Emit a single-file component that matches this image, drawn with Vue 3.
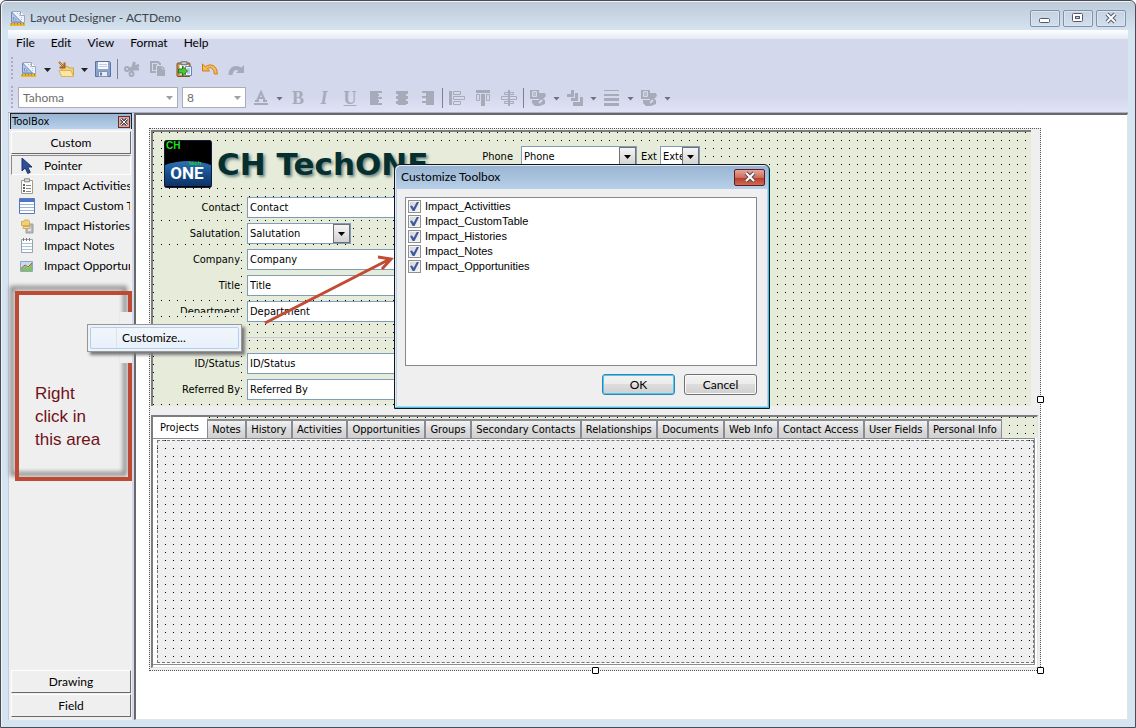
<script setup>
import { ref } from 'vue'

const menus = ['File', 'Edit', 'View', 'Format', 'Help']

const art = {
  layout: '<path d="M2 1.5h8.5l4 4v7H2z" fill="#eef3fb" stroke="#9aa8c6"/><path d="M10.5 1.5v4h4" fill="#fff" stroke="#9aa8c6"/><path d="M1.500 2v10h10z" fill="#b4c8e8" stroke="#6e88b8"/><path d="M3.500 7v3h3z" fill="#f3f7fd" stroke="#7d95c2"/><path d="M7 3h1v1H7zM9 5h1v1H9zM11 7h1v1h-1zM9 3h1v1H9zM11 9h1v1h-1z" fill="#b3c2de"/><path d="M0 13h15v3H0z" fill="#e9b62d"/><path d="M1.500 13v1.500M4.500 13v1.500M7.500 13v1.500M10.500 13v1.500M13.500 13v1.500" stroke="#a8801a"/>',
  open: '<path d="M6 5.500h4l1 1.500h4.500v8H3.500V9z" fill="#f2d27d" stroke="#cfa648"/><path d="M1 9.500h12l2.500 6H3.500z" fill="#fbe6a4" stroke="#d6b05a"/><path d="M1 1l5 5M6.500 1.500v5h-5" fill="none" stroke="#a8641f" stroke-width="2"/><path d="M1.500 1.500l4 4" stroke="#f0b23f"/>',
  save: '<path d="M.5.500h14l1 1v14H.5z" fill="#8ca3cb" stroke="#5a72a3"/><path d="M3 1h10v7H3z" fill="#f6f8fc"/><path d="M4 3.500h8M4 5.500h8" stroke="#c3cde0"/><path d="M3.500 10.500h9v5h-9z" fill="#e8ecf4" stroke="#8093b8"/><path d="M5 11.500h2v3H5z" fill="#6279a6"/>',
  cut: '<g fill="none" stroke="#a6abba" stroke-width="2"><circle cx="3" cy="8" r="2"/><circle cx="7.500" cy="13" r="2"/><path d="M5 8.500L15 4M7.500 11l3-10M8 8h7" stroke-width="3"/></g>',
  copy: '<path d="M1 1h7l2 2v8H1z" fill="none" stroke="#a6abba" stroke-width="2"/><path d="M3 3h4v6H3z" fill="#a6abba"/><path d="M6.500 4.500h6l3 3v8h-9z" fill="#a6abba" stroke="#d3d8ec"/><path d="M12 5v3h3" fill="none" stroke="#c4c9d9"/>',
  paste: '<rect x="1" y="2" width="13" height="13.500" rx="1" fill="#c9924c" stroke="#7b5220"/><path d="M3.500 4h9v9.500h-9z" fill="#fff"/><path d="M5 .8h6v3H5z" fill="#c6cad2" stroke="#666d79"/><path d="M9.500 5.500h6v9h-6z" fill="#eef3fb" stroke="#6886b4"/><path d="M11 8h3M11 10h3M11 12h3" stroke="#7f9ecb"/><path d="M2.500 8h4V5l5 5-5 5v-3h-4z" fill="#4fc43a" stroke="#1b7d15"/>',
  undo: '<path d="M.5 3v7h7L5.300 7.600c3-2 6.700-.6 7 5.400h3c0-9-7-11-12-7.300z" fill="#f6bd55" stroke="#cf7e1a"/>',
  redo: '<path d="M16 4v8H8l2.500-2.500C7 7.800 5 10 4.500 14H.5C.5 5.500 7.500 3 13.500 6.500z" fill="#a6abba"/>',
  color: '<path d="M2 11h4M10 11h4M4 11l4-9 4 9M5.500 8h5" fill="none" stroke="#a6abba" stroke-width="2"/><path d="M1 13h14v2H1z" fill="#a6abba"/>',
  left: '<path d="M2 1h12v2H2zM2 4h9v2H2zM2 7h12v2H2zM2 10h9v2H2zM2 13h12v2H2z" fill="#a6abba"/><path d="M2 1h8v14H2z" fill="#a6abba"/>',
  center: '<path d="M2 1h12v3H2zM2 6h12v3H2zM2 11h12v3H2z" fill="#a6abba"/><path d="M4 1h8v14H4z" fill="#a6abba"/>',
  right: '<path d="M2 1h12v2H2zM2 6h12v2H2zM2 11h12v2H2z" fill="#a6abba"/><path d="M6 1h8v14H6z" fill="#a6abba"/>',
  objLeft: '<path d="M0 1h3v14H0z" fill="#a6abba"/><path d="M4.500 1.500h7v3h-7zM4.500 6.500h11v3h-11zM4.500 11.500h7v3h-7z" fill="none" stroke="#a6abba"/>',
  objTop: '<path d="M1 0h14v3H1z" fill="#a6abba"/><path d="M1.500 4.500h3v6h-3zM11.500 4.500h3v6h-3z" fill="none" stroke="#a6abba"/><path d="M6 4h4v12H6z" fill="#a6abba"/>',
  objMid: '<path d="M7 0h2v16H7z" fill="#a6abba"/><path d="M3.500 2.500h9v2h-9zM.5 6.500h15v3H.5zM3.500 11.500h9v2h-9z" fill="none" stroke="#a6abba"/>',
  style: '<path d="M0 0h9v9H0z" fill="#a6abba"/><path d="M2.500 1.500h4v5h-4z" fill="#b8bdcb" stroke="#d3d8ec"/><path d="M9 3h6l1 3-3 3 2 1v4l-5 2H5l-3-3v-3h7z" fill="#a6abba"/><path d="M9 13l3-3" stroke="#d3d8ec" stroke-width="2"/>',
  order: '<path d="M4 0h3v7H0V4h4z" fill="#a6abba"/><path d="M8 3h3v8H4V8h4zM13 7h3v9H6v-4h7z" fill="#a6abba"/>',
  lines: '<path d="M0 0h15v1H0zM0 4h15v2H0zM0 8h15v3H0zM0 13h15v3H0z" fill="#a6abba"/>',
  pointer: '<path d="M3 0v13l3.200-3 2.600 5.500 2.500-1.200-2.600-5.300H13z" fill="#2f4f96" stroke="#1d3470"/>',
  tasks: '<path d="M2.500 2.500h11v13h-11z" fill="#fff" stroke="#a39a88"/><path d="M5.500.8h5v3h-5z" fill="#ddd" stroke="#888"/><path d="M4 6h2v2H4zM4 9h2v2H4zM4 12h2v2H4z" fill="#5b6b62"/><path d="M7 7.500h5M7 10.500h5M7 13.500h5" stroke="#888"/>',
  table: '<path d="M.5.500h15v15H.5z" fill="#fff" stroke="#5779ba"/><path d="M1 1h14v3H1z" fill="#4f76c2"/><path d="M1 6.500h14M1 9.500h14M1 12.500h14" stroke="#9fb4dc"/>',
  history: '<path d="M7 6h7v9H7z" fill="#b5b8bd" stroke="#9a9da3"/><path d="M9 9h3v4H9z" fill="#e2e4e7"/><path d="M2.500 3.500h2l1-1.500h4l1 1.500v4h-8z" fill="#f0cf76" stroke="#cfae5a"/><path d="M4 8.500h7v2H4z" fill="#f6dd96" stroke="#cfae5a"/>',
  notes: '<path d="M2.500 1.500h11v13h-11z" fill="#fff" stroke="#98a3b1"/><path d="M3 5.500h10M3 8.500h10M3 11.500h10" stroke="#a9c6d8"/><path d="M4.500 0v3M7.500 0v3M10.500 0v3" stroke="#777"/>',
  chart: '<path d="M1.500 3.500h12v10h-12z" fill="#c2dcf4" stroke="#8fa8be"/><path d="M2 11l4-3 3 2 4-5v8H2z" fill="#81c162"/><path d="M2 10.500l4-3.500 3 2 4-4" fill="none" stroke="#d04c32"/>'
}

const standardTools = [
  { icon: 'layout', label: 'New layout', drop: true },
  { icon: 'open', label: 'Open', drop: true },
  { icon: 'save', label: 'Save' },
  { sep: true },
  { icon: 'cut', label: 'Cut' },
  { icon: 'copy', label: 'Copy' },
  { icon: 'paste', label: 'Paste' },
  { icon: 'undo', label: 'Undo' },
  { icon: 'redo', label: 'Redo' }
]

const formatTools = [
  { icon: 'color', label: 'Font color', drop: true },
  { letter: 'B', label: 'Bold' },
  { letter: 'I', label: 'Italic' },
  { letter: 'U', label: 'Underline' },
  { icon: 'left', label: 'Align text left' },
  { icon: 'center', label: 'Align text center' },
  { icon: 'right', label: 'Align text right' },
  { sep: true },
  { icon: 'objLeft', label: 'Align left edges' },
  { icon: 'objTop', label: 'Align top edges' },
  { icon: 'objMid', label: 'Align centers' },
  { sep: true },
  { icon: 'style', label: 'Fill', drop: true },
  { icon: 'order', label: 'Order', drop: true },
  { icon: 'lines', label: 'Line weight', drop: true },
  { icon: 'style', label: 'Line color', drop: true }
]

const toolItems = [
  { icon: 'pointer', name: 'Pointer' },
  { icon: 'tasks', name: 'Impact Activities' },
  { icon: 'table', name: 'Impact Custom Table' },
  { icon: 'history', name: 'Impact Histories' },
  { icon: 'notes', name: 'Impact Notes' },
  { icon: 'chart', name: 'Impact Opportunities' }
]
const activeTool = ref('Pointer')

const fields = [
  { id: 'contact', label: 'Contact' },
  { id: 'salutation', label: 'Salutation', combo: true },
  { id: 'company', label: 'Company' },
  { id: 'title', label: 'Title' },
  { id: 'department', label: 'Department', clipped: true },
  { id: 'divider', rule: true },
  { id: 'status', label: 'ID/Status' },
  { id: 'referred', label: 'Referred By' }
]

const tabs = [
  'Projects', 'Notes', 'History', 'Activities', 'Opportunities', 'Groups',
  'Secondary Contacts', 'Relationships', 'Documents', 'Web Info',
  'Contact Access', 'User Fields', 'Personal Info'
]
const activeTab = ref('Projects')

const controls = ref([
  { name: 'Impact_Activitties', on: true },
  { name: 'Impact_CustomTable', on: true },
  { name: 'Impact_Histories', on: true },
  { name: 'Impact_Notes', on: true },
  { name: 'Impact_Opportunities', on: true }
])
</script>

<template>
  <div class="window">
    <header class="titlebar">
      <svg class="icon" viewBox="0 0 16 16" v-html="art.layout"></svg>
      <span class="caption">Layout Designer - ACTDemo</span>
      <button class="sys" aria-label="Minimize">
        <svg viewBox="0 0 14 12"><rect x="1.500" y="6.500" width="10" height="4" rx="1" fill="#fff" stroke="#55596b" /></svg>
      </button>
      <button class="sys" aria-label="Maximize">
        <svg viewBox="0 0 14 12"><rect x="1.500" y="1.500" width="10" height="8" rx="1" fill="#fff" stroke="#55596b" /><rect x="4.500" y="4.500" width="4" height="2" fill="#b9cbe4" stroke="#55596b" /></svg>
      </button>
      <button class="sys" aria-label="Close">
        <svg viewBox="0 0 14 12"><path d="M3 2l8 8M11 2l-8 8" stroke="#55596b" stroke-width="4" /><path d="M3 2l8 8M11 2l-8 8" stroke="#fff" stroke-width="2" /></svg>
      </button>
    </header>

    <div class="bars">
      <nav class="menubar">
        <button v-for="m in menus" :key="m">{{ m }}</button>
      </nav>
      <div class="toolbar standard">
        <i class="grip"></i>
        <template v-for="(t, i) in standardTools" :key="i">
          <i v-if="t.sep" class="sep"></i>
          <template v-else>
            <button class="tool" :aria-label="t.label"><svg class="icon" viewBox="0 0 16 16" v-html="art[t.icon]"></svg></button>
            <button v-if="t.drop" class="drop" :aria-label="t.label + ' options'"></button>
          </template>
        </template>
      </div>
      <div class="toolbar format">
        <i class="grip"></i>
        <span class="fontbox family"><select aria-label="Font" disabled><option>Tahoma</option></select></span>
        <span class="fontbox size"><select aria-label="Font size" disabled><option>8</option></select></span>
        <template v-for="(t, i) in formatTools" :key="i">
          <i v-if="t.sep" class="sep"></i>
          <template v-else>
            <button class="tool" :class="t.letter" :aria-label="t.label">
              <template v-if="t.letter">{{ t.letter }}</template>
              <svg v-else class="icon" viewBox="0 0 16 16" v-html="art[t.icon]"></svg>
            </button>
            <button v-if="t.drop" class="drop" :aria-label="t.label + ' options'"></button>
          </template>
        </template>
      </div>
    </div>

    <div class="body">
      <aside class="toolbox">
        <div class="boxtitle">
          <span>ToolBox</span>
          <button aria-label="Close toolbox"><svg viewBox="0 0 8 8"><path d="M1 1l6 6M7 1L1 7" stroke="#444" stroke-width="3" /><path d="M1 1l6 6M7 1L1 7" stroke="#fff" /></svg></button>
        </div>
        <button class="section">Custom</button>
        <button
          v-for="t in toolItems" :key="t.name" class="item"
          :class="{ active: t.name === activeTool }" @click="activeTool = t.name"
        >
          <svg class="icon" viewBox="0 0 16 16" v-html="art[t.icon]"></svg>
          <span>{{ t.name }}</span>
        </button>
        <div class="blank"></div>
        <button class="section">Drawing</button>
        <button class="section">Field</button>
      </aside>

      <main class="canvas">
        <div class="surface">
          <i class="handle mid-right"></i>
          <i class="handle mid-bottom"></i>
          <i class="handle corner"></i>

          <section class="form">
            <div class="banner">
              <svg class="logo" viewBox="0 0 48 48">
                <defs>
                  <linearGradient id="globe" x1="0" y1="0" x2="0" y2="1">
                    <stop offset="0" stop-color="#2f72b4" /><stop offset=".5" stop-color="#174f8c" /><stop offset="1" stop-color="#0d3264" />
                  </linearGradient>
                </defs>
                <rect x=".5" y=".5" width="47" height="47" rx="2" fill="#000" stroke="#15183a" />
                <path d="M1 25Q24 17 47 25V46H1z" fill="url(#globe)" />
                <text x="2" y="9" class="ch">CH</text>
                <text x="25" y="25" class="tech">tech</text>
                <text x="23" y="39" text-anchor="middle" class="one">ONE</text>
              </svg>
              <h1>CH TechONE</h1>
              <label class="lbl phone" for="phone">Phone</label>
              <span class="combo wide"><select id="phone"><option>Phone</option></select><i></i></span>
              <label class="lbl ext" for="ext">Ext</label>
              <span class="combo small"><select id="ext"><option>Extension</option></select><i></i></span>
            </div>
            <div class="fields">
              <template v-for="f in fields" :key="f.id">
                <hr v-if="f.rule">
                <template v-else>
                  <label class="lbl" :class="{ clipped: f.clipped }" :for="f.id">{{ f.label }}</label>
                  <span v-if="f.combo" class="combo"><select :id="f.id"><option>{{ f.label }}</option></select><i></i></span>
                  <input v-else :id="f.id" type="text" :value="f.label">
                </template>
              </template>
            </div>
          </section>

          <section class="tabs">
            <div class="strip" role="tablist">
              <button
                v-for="t in tabs" :key="t" role="tab" :aria-selected="t === activeTab"
                :class="{ current: t === activeTab }" @click="activeTab = t"
              >{{ t }}</button>
            </div>
            <div class="page"><div class="grid"></div></div>
          </section>
        </div>
      </main>
    </div>

    <div class="callout">
      <i class="frame"></i>
      <i class="gap"></i>
      <p>Right<br>click in<br>this area</p>
    </div>
    <div class="context"><button>Customize...</button></div>

    <svg class="arrow" viewBox="0 0 136 76">
      <path d="M4 70L129 6M117 4l13 2-9 10" fill="none" stroke="#c24b33" stroke-width="3" />
    </svg>

    <div class="dialog" role="dialog" aria-labelledby="dlg">
      <div class="dlghead">
        <span id="dlg">Customize Toolbox</span>
        <button aria-label="Close"><svg viewBox="0 0 14 12"><path d="M3 2l8 8M11 2l-8 8" stroke="#5c4a55" stroke-width="4" /><path d="M3 2l8 8M11 2l-8 8" stroke="#fff" stroke-width="2" /></svg></button>
      </div>
      <div class="dlgbody">
        <div class="checks">
          <label v-for="c in controls" :key="c.name"><input v-model="c.on" type="checkbox">{{ c.name }}</label>
        </div>
        <div class="actions">
          <button class="primary">OK</button>
          <button>Cancel</button>
        </div>
      </div>
    </div>
  </div>
</template>

<style>
body {
  background: #fff;
}
</style>

<style scoped>
.window {
  --ui: Lato, "Noto Sans", sans-serif;
  --form: "DejaVu Sans Condensed", "DejaVu Sans", sans-serif;
  --dots: url("data:image/svg+xml,%3Csvg xmlns='http://www.w3.org/2000/svg' width='8' height='8'%3E%3Crect width='1' height='1'/%3E%3C/svg%3E");
  position: relative;
  box-sizing: border-box;
  height: 100vh;
  min-height: 560px;
  display: flex;
  flex-direction: column;
  padding: 0 7px 7px;
  border: 1px solid #4b4b55;
  border-radius: 6px 6px 0 0;
  background: linear-gradient(#bccad8, #d6e4f2 30px);
  box-shadow: inset 1px 1px #eef4fa;
  font: 12px/16px var(--ui);
  color: #000;
  overflow: hidden;
}
button,
select,
input {
  box-sizing: border-box;
  margin: 0;
  padding: 0;
  border: 0;
  border-radius: 0;
  background: none;
  font: inherit;
  color: inherit;
}
.icon {
  width: 16px;
  height: 16px;
  flex: none;
}
.titlebar {
  display: flex;
  align-items: center;
  height: 29px;
  padding: 5px 2px 0;
  box-sizing: border-box;
  color: #3d4450;
}
.caption {
  flex: 1;
  margin-left: 4px;
}
.sys {
  display: flex;
  align-items: center;
  justify-content: center;
  width: 30px;
  height: 17px;
  margin-left: 3px;
  border: 1px solid #8190ae;
  border-radius: 2px;
  box-shadow: inset 0 0 0 1px #dae5f2;
}
.sys svg {
  width: 14px;
  height: 12px;
}
.bars {
  background: linear-gradient(#fdfefe, #e4eaf5 9px, #d3d8ec 9px, #d3d8ec 66px, #dfe3f5);
  border-bottom: 1px solid #aab0c6;
}
.menubar {
  display: flex;
  height: 25px;
  padding-left: 8px;
  gap: 16px;
}
.toolbar {
  display: flex;
  align-items: center;
  height: 28px;
}
.format {
  height: 29px;
}
.grip {
  width: 3px;
  height: 24px;
  margin: 0 4px 0 3px;
  background: conic-gradient(from 270deg at 2px 2px, #a8adc0 90deg, transparent 0) 0 0 / 4px 4px;
}
.standard .grip {
  margin-right: 2px;
}
.tool {
  display: flex;
  align-items: center;
  justify-content: center;
  width: 26px;
  height: 22px;
}
.tool.B,
.tool.I,
.tool.U {
  font: bold 18px/20px "Liberation Serif", serif;
  color: #a6abba;
}
.tool.I {
  font-style: italic;
}
.tool.U {
  text-decoration: underline;
}
.drop {
  width: 11px;
  height: 20px;
}
.drop::before {
  content: "";
  display: block;
  width: 7px;
  height: 4px;
  margin: 2px auto 0;
  background: #222;
  clip-path: polygon(0 0, 100% 0, 50% 100%);
}
.format .drop::before {
  background: #6c7080;
}
.sep {
  width: 1px;
  height: 20px;
  margin: 0 1px;
  background: #7b8195;
}
.fontbox {
  position: relative;
  width: 160px;
  height: 21px;
  margin-right: 4px;
}
.fontbox.size {
  width: 64px;
  margin-right: 2px;
}
.fontbox select {
  appearance: none;
  width: 100%;
  height: 100%;
  padding: 0 20px 0 4px;
  border: 1px solid #abadb3;
  background: #fff;
  color: #6d6d6d;
  opacity: 1;
}
.fontbox::after {
  content: "";
  position: absolute;
  right: 5px;
  top: 9px;
  width: 7px;
  height: 4px;
  background: #a0a0a0;
  clip-path: polygon(0 0, 100% 0, 50% 100%);
}
.body {
  flex: 1;
  min-height: 0;
  display: flex;
}
.toolbox {
  flex: none;
  display: flex;
  flex-direction: column;
  box-sizing: border-box;
  width: 126px;
  padding: 0 1px 2px 2px;
  border-right: 2px solid #d3d8ec;
  border-left: 1px solid #c3cbe4;
  background: #efefef;
}
.boxtitle {
  display: flex;
  align-items: center;
  justify-content: space-between;
  height: 16px;
  margin: 0 -1px 2px;
  padding: 0 1px;
  border-left: 1px solid #222;
  border-right: 1px solid #222;
  border-top: 1px solid #222;
  box-sizing: border-box;
  background: linear-gradient(#98b4d2, #b9d1ea);
  font: 11px/14px var(--form);
}
.boxtitle button {
  display: flex;
  align-items: center;
  justify-content: center;
  width: 12px;
  height: 12px;
  border: 1px solid #6b2a2a;
  background: #dba9a5;
}
.boxtitle svg {
  width: 8px;
  height: 8px;
}
.section {
  height: 23px;
  flex: none;
  margin-bottom: 1px;
  border: solid;
  border-width: 1px;
  border-color: #fff #696969 #696969 #fff;
}
.item {
  display: flex;
  align-items: center;
  gap: 9px;
  flex: none;
  height: 20px;
  padding: 1px 0 0 7px;
  border: 1px solid transparent;
  overflow: hidden;
  white-space: nowrap;
}
.item.active {
  border-color: #8a8a8a #fff #fff #8a8a8a;
}
.blank {
  flex: 1;
}
.canvas {
  flex: 1;
  min-width: 0;
  display: flex;
  border: solid;
  border-width: 2px 1px 1px 2px;
  border-color: #696969 #e3e3e3 #e3e3e3 #696969;
  background: #fff;
}
.surface {
  position: relative;
  flex: 1;
  min-width: 0;
  display: flex;
  flex-direction: column;
  margin: 13px 86px 48px 13px;
  padding: 1px 2px 2px 1px;
  border: 1px dotted #555;
  background: #efefef;
  font: 11px/19px var(--form);
}
.handle {
  position: absolute;
  width: 5px;
  height: 5px;
  border: 1px solid #000;
  border-radius: 1px;
  background: #fff;
  z-index: 1;
}
.mid-right {
  right: -4px;
  top: calc(50% - 4px);
}
.mid-bottom {
  bottom: -4px;
  left: calc(50% - 3px);
}
.corner {
  right: -4px;
  bottom: -4px;
}
.form {
  margin: 0 7px 9px 0;
  padding-bottom: 6px;
  border-left: 2px solid #7d7d7d;
  border-top: 2px solid #7d7d7d;
  background: var(--dots) 0 0 / 8px 8px #e6ecd9;
}
.banner {
  display: flex;
  align-items: flex-start;
  padding: 8px 0 9px 11px;
}
.logo {
  width: 48px;
  height: 48px;
  flex: none;
}
.ch {
  font: bold 10px "Liberation Sans", sans-serif;
  fill: #1be21b;
}
.tech {
  font: bold 6px "Liberation Sans", sans-serif;
  fill: #1bd41b;
}
.one {
  font: bold 17px Roboto, sans-serif;
  fill: #fff;
}
h1 {
  box-sizing: border-box;
  width: 216px;
  margin: 4px 0 0 4px;
  padding-left: 1px;
  background: #e6ecd9;
  font: bold 31px/40px "DejaVu Sans", sans-serif;
  color: #062f30;
  text-shadow: 2px 2px 3px #6f8583;
  white-space: nowrap;
}
.lbl {
  height: 21px;
  box-sizing: border-box;
  padding-right: 1px;
  background: #e6ecd9;
  line-height: 21px;
  text-align: right;
}
.phone {
  width: 88px;
  margin: 6px 0 0 1px;
  padding-right: 8px;
}
.ext {
  margin-top: 6px;
  padding: 0 3px 0 4px;
}
.fields {
  display: grid;
  grid-template-columns: 87px 200px;
  grid-auto-rows: 21px;
  gap: 5px 6px;
  margin-left: 1px;
}
.clipped {
  height: 12px;
  overflow: hidden;
}
hr {
  grid-column: 2;
  align-self: center;
  width: 100%;
  margin: 0;
  border: 0;
  border-top: 1px solid #c5cad6;
}
.fields input,
.combo select {
  width: 100%;
  height: 21px;
  padding: 0 2px;
  border: 1px solid #7f9db9;
  background: #fff;
}
.combo {
  position: relative;
  width: 104px;
  height: 21px;
}
.banner .combo {
  margin-top: 6px;
}
.combo.wide {
  width: 116px;
}
.combo.small {
  width: 40px;
}
.combo select {
  appearance: none;
  padding: 0 17px 0 2px;
}
.combo i {
  position: absolute;
  right: 1px;
  top: 1px;
  box-sizing: border-box;
  width: 17px;
  height: 19px;
  border: 1px solid #707070;
  background: linear-gradient(#f4f4f4, #d2d2d2);
  pointer-events: none;
}
.combo i::before {
  content: "";
  position: absolute;
  left: 4px;
  top: 7px;
  width: 7px;
  height: 4px;
  background: #000;
  clip-path: polygon(0 0, 100% 0, 50% 100%);
}
.tabs {
  flex: 1;
  min-height: 0;
  display: flex;
  flex-direction: column;
  border: solid;
  border-width: 2px 1px 1px 2px;
  border-color: #7d7d7d #e3e3e3 #e3e3e3 #7d7d7d;
  background: #fff;
}
.strip {
  display: flex;
  align-items: flex-end;
  height: 21px;
  padding-right: 35px;
  background: var(--dots) 0 0 / 8px 8px #e6ecd9;
}
.strip button {
  flex: 1 0 auto;
  height: 19px;
  padding: 0 3px;
  border: solid #898c95;
  border-width: 2px 1px 0 1px;
  background: linear-gradient(#f2f2f2, #dcdcdc 50%, #cfcfcf);
  line-height: 17px;
  white-space: nowrap;
}
.strip .current {
  flex: none;
  height: 21px;
  padding: 0 8px 0 7px;
  border: 0;
  background: #fff;
}
.page {
  flex: 1;
  display: flex;
  margin: 0 2px 2px 0;
  padding: 1px 0 1px 4px;
  border: solid #898c95;
  border-width: 1px 1px 1px 0;
}
.grid {
  flex: 1;
  border: 1px dashed #777;
  background: var(--dots) 7px 7px / 8px 8px #efefef;
}
.callout {
  position: absolute;
  left: 14px;
  top: 290px;
  width: 117px;
  height: 190px;
}
.frame {
  position: absolute;
  inset: 0;
  border: 4px solid #bf4a33;
  filter: drop-shadow(-5px -5px 2px #888);
}
.gap {
  position: absolute;
  right: 0;
  top: 21px;
  width: 12px;
  height: 51px;
  background: #efefef;
}
.callout p {
  position: relative;
  margin: 91px 0 0 20px;
  font: 17px/23px "Liberation Sans", sans-serif;
  color: #6f0f18;
}
.context {
  position: absolute;
  left: 86px;
  top: 323px;
  box-sizing: border-box;
  width: 155px;
  height: 28px;
  padding: 2px;
  border: 1px solid #979797;
  background: #f1f1f1;
  box-shadow: 3px 3px 3px #777;
}
.context button {
  width: 100%;
  height: 100%;
  padding-left: 31px;
  border: 1px solid #aecff7;
  border-radius: 2px;
  background: linear-gradient(90deg, transparent 25px, #d9e2ee 25px, #d9e2ee 26px, transparent 26px), linear-gradient(#f2f6fb, #e8f0fa);
  text-align: left;
}
.arrow {
  position: absolute;
  left: 260px;
  top: 252px;
  width: 136px;
  height: 76px;
}
.dialog {
  position: absolute;
  left: 393px;
  top: 163px;
  box-sizing: border-box;
  width: 376px;
  border: 1px solid #10181c;
  border-radius: 6px 6px 0 0;
  background: linear-gradient(#98b4d2, #b9d1ea 25px);
  box-shadow: inset -1px -1px #34c6e6, inset 1px 1px #dfeaf5;
}
.dlghead {
  display: flex;
  align-items: center;
  justify-content: space-between;
  height: 24px;
  padding: 0 4px 0 6px;
}
.dlghead button {
  display: flex;
  align-items: center;
  justify-content: center;
  width: 31px;
  height: 17px;
  border: 1px solid #5a1f26;
  border-radius: 2px;
  background: linear-gradient(#e3a79c, #cf6d5c 50%, #b73a29 50%, #cf6a50);
}
.dlghead svg {
  width: 14px;
  height: 12px;
}
.dlgbody {
  margin: 0 2px 2px;
  padding: 8px 10px 11px 8px;
  background: #efefef;
}
.checks {
  box-sizing: border-box;
  height: 169px;
  padding: 1px 2px;
  border: 1px solid #828790;
  background: #fff;
  font: 11px/15px "Liberation Sans", sans-serif;
}
.checks label {
  display: flex;
  align-items: center;
  gap: 4px;
  height: 15px;
}
.checks input {
  appearance: none;
  width: 13px;
  height: 13px;
  border: 1px solid #8e8f8f;
  background: linear-gradient(135deg, #cfd3da, #f6f6f6);
  box-shadow: inset 0 0 0 1px #f4f4f4;
}
.checks input:checked::before {
  content: "";
  display: block;
  width: 9px;
  height: 9px;
  margin: 1px;
  background: #41599b;
  clip-path: polygon(0 45%, 22% 40%, 40% 65%, 75% 0, 100% 0, 50% 100%, 30% 100%);
}
.actions {
  display: flex;
  justify-content: flex-end;
  gap: 9px;
  margin-top: 8px;
}
.actions button {
  width: 73px;
  height: 21px;
  border: 1px solid #707070;
  border-radius: 3px;
  background: linear-gradient(#f2f2f2, #ebebeb 50%, #dddddd 50%, #cfcfcf);
  box-shadow: inset 0 0 0 1px #fafafa;
}
.actions .primary {
  border-color: #3c7fb1;
  box-shadow: inset 0 0 0 1px #48cbf3;
}
</style>
